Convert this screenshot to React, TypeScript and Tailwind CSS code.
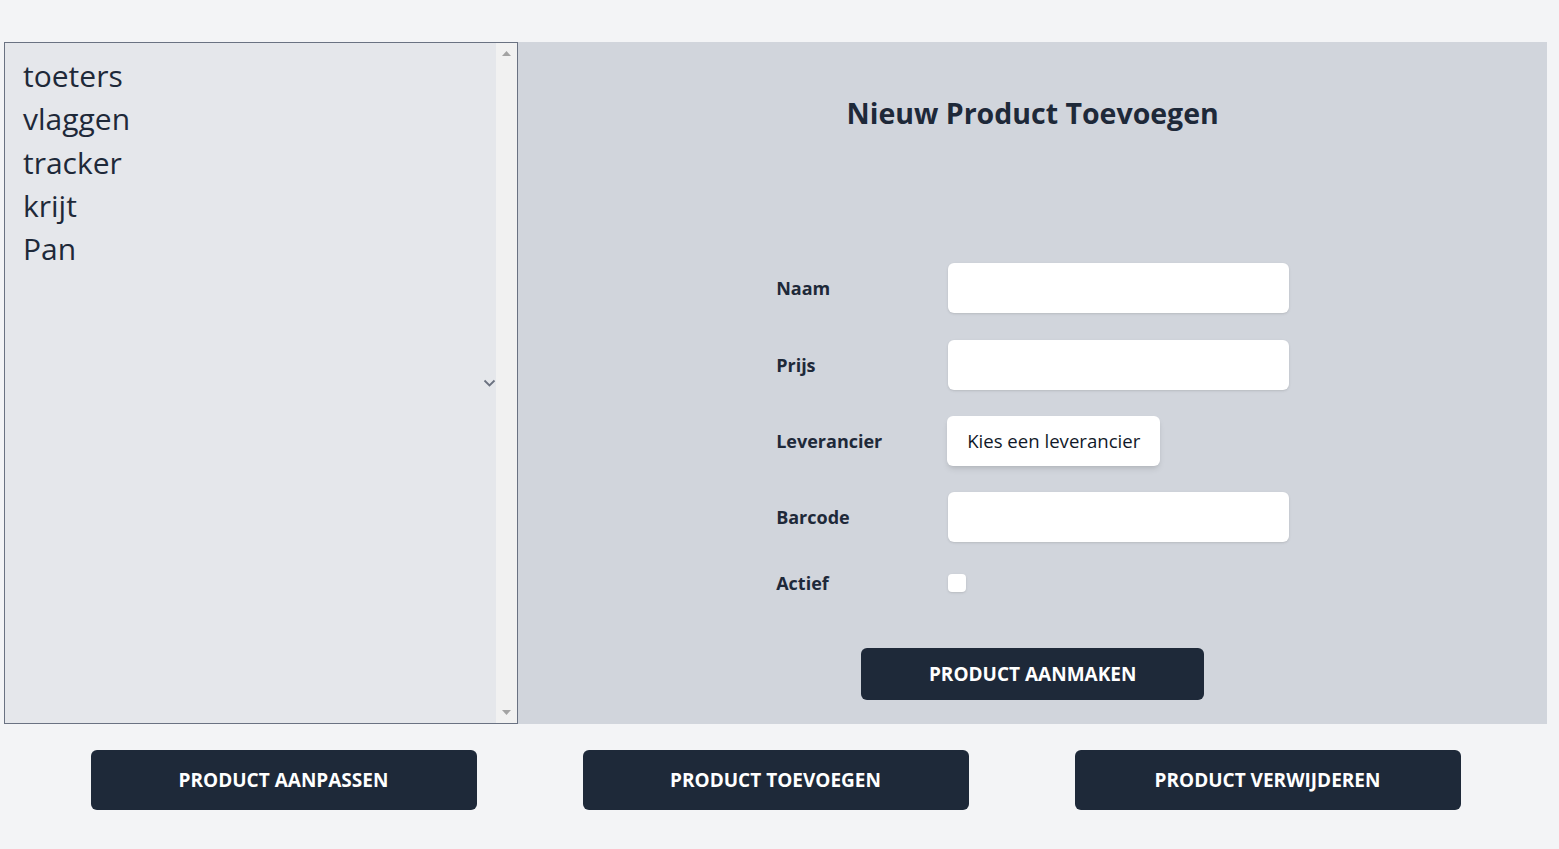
const producten = ["toeters", "vlaggen", "tracker", "krijt", "Pan"];

function Veld({ label, children }: { label: string; children: React.ReactNode }) {
  return (
    <div className="flex items-center">
      <label className="w-[172px] text-lg font-bold text-gray-800">{label}</label>
      {children}
    </div>
  );
}

export default function App() {
  return (
    <div
      className="min-h-[849px] bg-gray-100 pt-[42px] text-gray-800"
      style={{ fontFamily: '"Open Sans", "Noto Sans", sans-serif' }}
    >
      <div className="ml-1 grid w-[1543px] grid-cols-3">
        {/* lijst met producten */}
        <div className="relative flex h-[682px] border border-gray-500 bg-gray-200">
          <ul className="relative flex-1 pt-[11px] pl-[18px] text-[30px] leading-[43.3px] text-gray-800">
            {producten.map((p) => (
              <li key={p}>{p}</li>
            ))}
            <svg
              className="absolute top-[336px] right-0"
              width="13"
              height="9"
              viewBox="0 0 13 9"
              fill="none"
            >
              <path d="M1.5 1.5 L6.5 6.5 L11.5 1.5" stroke="#6b7280" strokeWidth="1.8" />
            </svg>
          </ul>
          <div className="flex w-[21px] flex-col items-center justify-between bg-[#f1f1f1] py-[8px]">
            <svg width="9" height="5" viewBox="0 0 9 5">
              <path d="M0 5 L4.5 0 L9 5 Z" fill="#a3a3a3" />
            </svg>
            <svg width="9" height="5" viewBox="0 0 9 5">
              <path d="M0 0 L4.5 5 L9 0 Z" fill="#a3a3a3" />
            </svg>
          </div>
        </div>

        {/* formulier */}
        <div className="col-span-2 flex h-[682px] flex-col items-center bg-gray-300">
          <h1 className="mt-[53px] text-[28.5px] leading-9 font-bold text-gray-800">
            Nieuw Product Toevoegen
          </h1>
          <form className="mt-[132px] flex w-[513px] flex-col">
            <Veld label="Naam">
              <input className="h-[50px] w-[341px] rounded-md bg-white shadow-sm" />
            </Veld>
            <div className="mt-[27px]">
              <Veld label="Prijs">
                <input className="h-[50px] w-[341px] rounded-md bg-white shadow-sm" />
              </Veld>
            </div>
            <div className="mt-[26px]">
              <Veld label="Leverancier">
                <button
                  type="button"
                  className="-ml-px h-[50px] rounded-md bg-white px-5 text-[18.6px] text-gray-900 shadow-md"
                >
                  Kies een leverancier
                </button>
              </Veld>
            </div>
            <div className="mt-[26px]">
              <Veld label="Barcode">
                <input className="h-[50px] w-[341px] rounded-md bg-white shadow-sm" />
              </Veld>
            </div>
            <div className="mt-[27px]">
              <Veld label="Actief">
                <input
                  type="checkbox"
                  className="h-[18px] w-[18px] appearance-none rounded bg-white shadow-sm"
                />
              </Veld>
            </div>
            <button
              type="button"
              className="mx-auto mt-[51px] h-[52px] w-[343px] rounded-md bg-gray-800 text-[19px] font-bold text-white uppercase"
            >
              Product aanmaken
            </button>
          </form>
        </div>
      </div>

      <div className="ml-1 mt-[26px] flex w-[1543px] justify-center gap-[106px]">
        {["Product aanpassen", "Product toevoegen", "Product verwijderen"].map((t) => (
          <button
            key={t}
            className="h-[60px] w-[386px] rounded-md bg-gray-800 text-[19px] font-bold text-white uppercase"
          >
            {t}
          </button>
        ))}
      </div>
    </div>
  );
}
